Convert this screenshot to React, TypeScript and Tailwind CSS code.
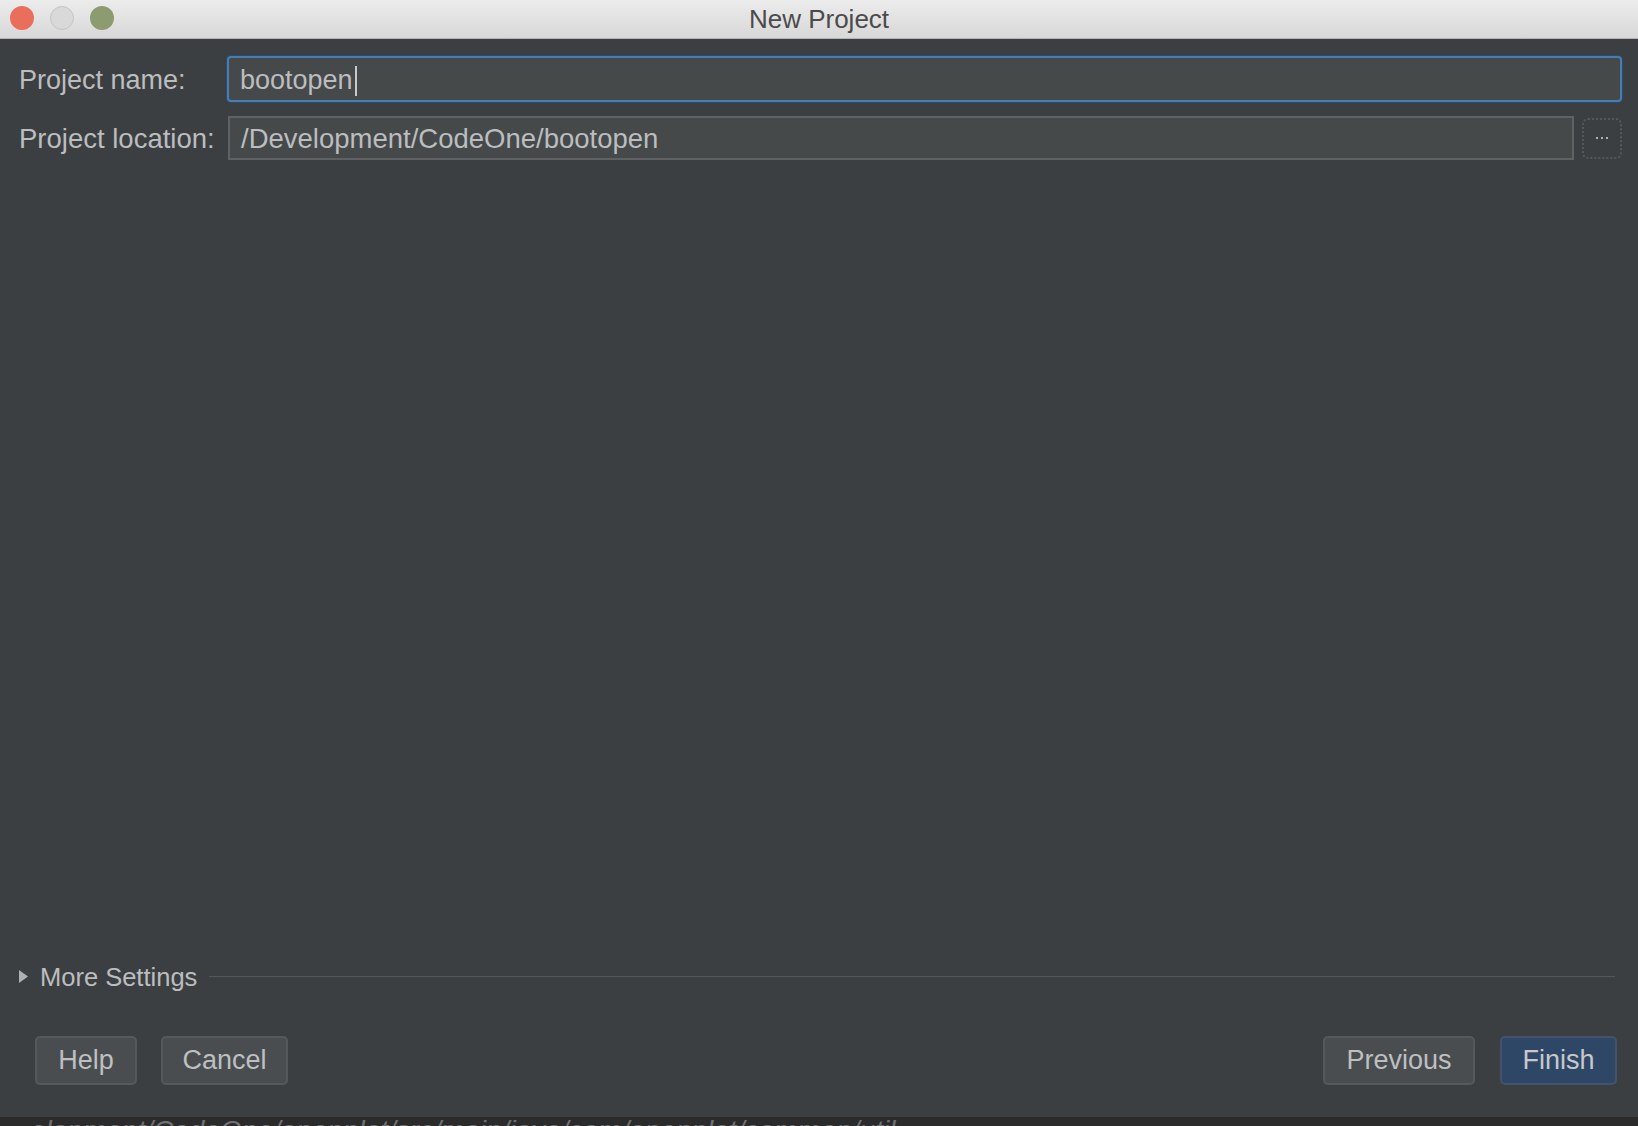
import React from 'react';

const font = { fontFamily: '"Liberation Sans", Arial, sans-serif' };

const Button = ({ label, primary }: { label: string; primary?: boolean }) => (
  <button
    className={
      primary
        ? 'h-[49px] rounded-[5px] border-2 border-[#45536a] bg-[#2f4767] text-[27px] text-[#c6c8cb]'
        : 'h-[49px] rounded-[5px] border-2 border-[#55595b] bg-[#4a4d50] text-[27px] text-[#bdbfc1]'
    }
  >
    {label}
  </button>
);

export default function App() {
  return (
    <div className="flex h-[1126px] w-full flex-col overflow-hidden bg-[#3c3f41]" style={font}>
      {/* Title bar */}
      <div className="relative flex h-[39px] shrink-0 items-center justify-center border-b border-[#b5b5b5] bg-gradient-to-b from-[#ececec] to-[#d8d8d8]">
        <div className="absolute left-[10px] top-[6px] flex gap-[16px]">
          <span className="h-[24px] w-[24px] rounded-full bg-[#e96f5c]" />
          <span className="h-[24px] w-[24px] rounded-full border border-[#c4c4c4] bg-[#d9d9d9]" />
          <span className="h-[24px] w-[24px] rounded-full bg-[#8c9c70]" />
        </div>
        <span className="text-[26px] text-[#4b4b4b]">New Project</span>
      </div>

      {/* Body */}
      <div className="flex flex-1 flex-col pl-[19px] pr-[16px] pt-[17px]">
        <div className="flex items-center">
          <span className="w-[208px] shrink-0 pt-[3px] text-[27px] text-[#bbbdbf]">Project name:</span>
          <div className="flex h-[46px] flex-1 items-center rounded-[4px] border-2 border-[#4a7cb4] bg-[#45494a] pl-[11px] pt-[3px] shadow-[0_0_0_1px_#2f4a69]">
            <span className="text-[27px] text-[#bbbdbf]">bootopen</span>
            <span className="ml-[2px] h-[30px] w-[2px] bg-[#c8c8c8]" />
          </div>
        </div>

        <div className="mt-[14px] flex items-center">
          <span className="w-[209px] shrink-0 pt-[1px] text-[27.5px] text-[#bbbdbf]">Project location:</span>
          <div className="flex h-[44px] flex-1 items-center border-2 border-[#5f6162] bg-[#45494a] pl-[11px] pt-[1px]">
            <span className="text-[27.5px] text-[#bbbdbf]">/Development/CodeOne/bootopen</span>
          </div>
          <div className="ml-[8px] flex h-[41px] w-[40px] shrink-0 items-center justify-center gap-[3px] rounded-[6px] border-2 border-dotted border-[#56595b] bg-[#3c3f41]">
            <span className="h-[2px] w-[2px] bg-[#b0b0b0]" />
            <span className="h-[2px] w-[2px] bg-[#b0b0b0]" />
            <span className="h-[2px] w-[2px] bg-[#b0b0b0]" />
          </div>
        </div>

        <div className="flex-1" />

        {/* More Settings */}
        <div className="flex items-center">
          <svg width="9" height="13" viewBox="0 0 9 13" className="shrink-0">
            <path d="M0 0 L9 6.5 L0 13 Z" fill="#aeb0b2" />
          </svg>
          <span className="ml-[12px] text-[25.5px] text-[#bbbdbf]">More Settings</span>
          <div className="ml-[12px] mr-[7px] h-px flex-1 bg-[#55585a]" />
        </div>

        {/* Buttons */}
        <div className="mb-[32px] mt-[40px] flex items-center pl-[16px] pr-[5px]">
          <div className="flex w-[102px] flex-col">
            <Button label="Help" />
          </div>
          <div className="ml-[24px] flex w-[127px] flex-col">
            <Button label="Cancel" />
          </div>
          <div className="flex-1" />
          <div className="flex w-[152px] flex-col">
            <Button label="Previous" />
          </div>
          <div className="ml-[25px] flex w-[117px] flex-col">
            <Button label="Finish" primary />
          </div>
        </div>
      </div>

      {/* Partially visible window behind */}
      <div className="h-[9px] shrink-0 overflow-hidden bg-[#2b2b2b]">
        <div className="-mt-[1px] pl-[30px] text-[28px] italic leading-[30px] text-[#6f7174]">
          elopment/CodeOne/openplat/src/main/java/com/openplat/common/util
        </div>
      </div>
    </div>
  );
}
